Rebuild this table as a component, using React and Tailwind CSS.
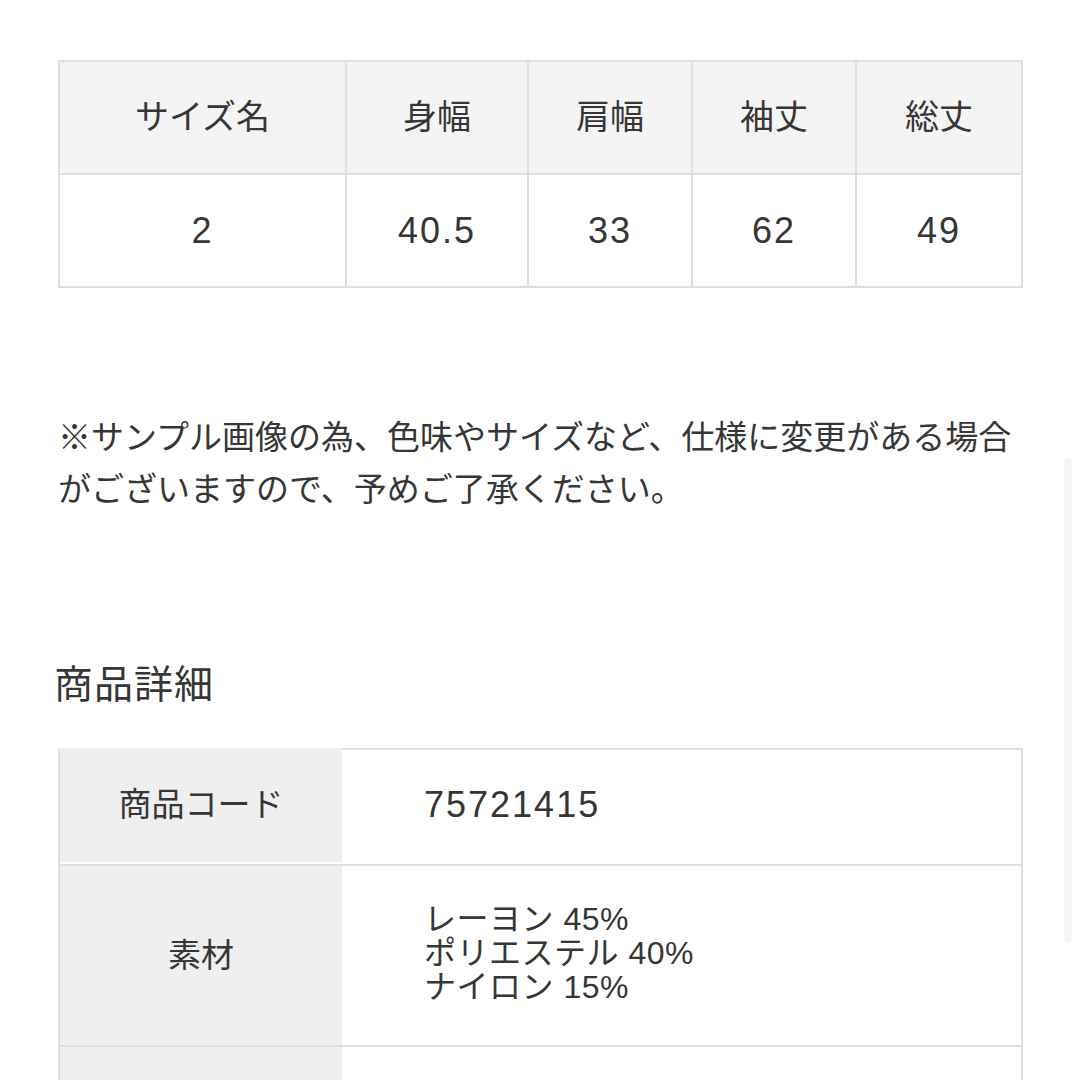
import React from "react";

const font = { fontFamily: '"Liberation Sans", "Noto Sans CJK JP", sans-serif' };

const sizeHeads = ["サイズ名", "身幅", "肩幅", "袖丈", "総丈"];
const sizeVals = ["2", "40.5", "33", "62", "49"];
const colW = ["w-[287px]", "w-[182px]", "w-[164px]", "w-[164px]", "w-[166px]"];

const App = () => {
  return (
    <div className="relative w-[1080px] h-[1080px] overflow-hidden bg-white text-[#363636]" style={font}>
      <div className="pl-[58px] pt-[60px] w-[1023px]">
        {/* Size table */}
        <table className="w-[965px] border-collapse border-2 border-[#e2dede] text-[34px]">
          <thead>
            <tr className="h-[113px] bg-[#f4f4f4]">
              {sizeHeads.map((h, i) => (
                <th key={h} className={`${colW[i]} border-2 border-[#e2dede] font-normal text-center`}>
                  {h}
                </th>
              ))}
            </tr>
          </thead>
          <tbody>
            <tr className="h-[113px]">
              {sizeVals.map((v, i) => (
                <td key={i} className="border-2 border-[#e2dede] text-center text-[36px] tracking-[2px]">
                  {v}
                </td>
              ))}
            </tr>
          </tbody>
        </table>

        {/* Note */}
        <p className="mt-[124px] text-[33px] leading-[52px]">
          ※サンプル画像の為、色味やサイズなど、仕様に変更がある場合がございますので、予めご了承ください。
        </p>

        {/* Details */}
        <h2 className="mt-[141px] text-[39px] leading-[56px] -ml-[4px] tracking-[1px]">商品詳細</h2>

        <div className="mt-[35px] w-[965px] border-2 border-[#e2dede] text-[33px]">
          <div className="flex h-[116px] border-b-2 border-[#e2dede]">
            <div className="w-[282px] bg-[#efefef] flex items-center justify-center -translate-y-[2px]">商品コード</div>
            <div className="flex-1 flex items-center pl-[82px] text-[36px] tracking-[2px] -translate-y-[2px]">75721415</div>
          </div>
          <div className="flex h-[181px] border-b-2 border-[#e2dede]">
            <div className="w-[282px] bg-[#efefef] flex items-center justify-center">素材</div>
            <div className="flex-1 flex flex-col justify-center pl-[82px] pb-[6px] text-[32px] leading-[34px] tracking-[0.5px]">
              <span>レーヨン 45%</span>
              <span>ポリエステル 40%</span>
              <span>ナイロン 15%</span>
            </div>
          </div>
          <div className="flex h-[120px]">
            <div className="w-[282px] bg-[#efefef]"></div>
            <div className="flex-1"></div>
          </div>
        </div>
      </div>

      {/* scrollbar */}
      <div className="absolute left-[1064px] top-[458px] w-[8px] h-[485px] rounded-full bg-[#f5f5f5]"></div>
    </div>
  );
};

export default App;
